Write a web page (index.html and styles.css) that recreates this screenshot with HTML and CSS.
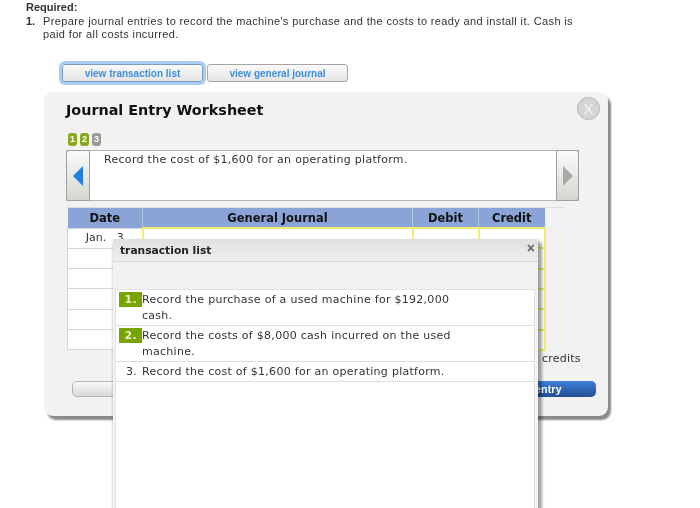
FILE: index.html
```html
<!DOCTYPE html>
<html lang="en">
<head>
<meta charset="utf-8">
<title>Journal Entry Worksheet</title>
<link rel="stylesheet" href="styles.css">
</head>
<body>
<div class="page">
  <section class="required">
    <div class="req-title">Required:</div>
    <div class="req-item"><b class="req-num">1.</b><span>Prepare journal entries to record the machine's purchase and the costs to ready and install it. Cash is paid for all costs incurred.</span></div>
  </section>
  <div class="tabs">
    <button class="tab tab-focus">view transaction list</button>
    <button class="tab">view general journal</button>
  </div>
  <section class="panel">
    <div class="close-round">X</div>
    <h1 class="panel-title">Journal Entry Worksheet</h1>
    <div class="steps"><span class="step done">1</span><span class="step done">2</span><span class="step todo">3</span></div>
    <div class="desc">
      <div class="nav-btn">
        <svg width="10" height="20" viewBox="0 0 10 20"><path d="M10 0V20L0 10Z" fill="#1f7fe0"/></svg>
      </div>
      <div class="desc-text">Record the cost of $1,600 for an operating platform.</div>
      <div class="nav-btn nav-next">
        <svg width="10" height="20" viewBox="0 0 10 20"><path d="M0 0V20L10 10Z" fill="#a9a9a9"/></svg>
      </div>
    </div>
    <div class="rule"></div>
    <table class="journal">
      <thead>
        <tr><th class="c-date">Date</th><th class="c-gj">General Journal</th><th class="c-num">Debit</th><th class="c-num">Credit</th></tr>
      </thead>
      <tbody>
        <tr><td class="date">Jan.&nbsp;&nbsp;&nbsp;3</td><td class="cell"></td><td class="cell"></td><td class="cell"></td></tr>
        <tr><td class="date"></td><td class="cell"></td><td class="cell"></td><td class="cell"></td></tr>
        <tr><td class="date"></td><td class="cell"></td><td class="cell"></td><td class="cell"></td></tr>
        <tr><td class="date"></td><td class="cell"></td><td class="cell"></td><td class="cell"></td></tr>
        <tr><td class="date"></td><td class="cell"></td><td class="cell"></td><td class="cell"></td></tr>
        <tr><td class="date"></td><td class="cell"></td><td class="cell"></td><td class="cell"></td></tr>
      </tbody>
    </table>
    <div class="credits">credits</div>
    <div class="actions">
      <div class="act act-grey"></div>
      <div class="act act-blue">entry</div>
    </div>
  </section>
  <section class="modal">
    <header class="modal-head"><span>transaction list</span><span class="modal-x">×</span></header>
    <div class="modal-body">
      <ol class="tx-list">
        <li class="tx"><span class="tx-num tx-done">1.</span><span class="tx-text">Record the purchase of a used machine for $192,000 cash.</span></li>
        <li class="tx"><span class="tx-num tx-done">2.</span><span class="tx-text">Record the costs of $8,000 cash incurred on the used machine.</span></li>
        <li class="tx"><span class="tx-num">3.</span><span class="tx-text">Record the cost of $1,600 for an operating platform.</span></li>
      </ol>
    </div>
  </section>
</div>
</body>
</html>
```
FILE: styles.css
```css
* { box-sizing: border-box; }
html, body { margin: 0; height: 508px; overflow: hidden; background: #fff; }
.page { position: relative; width: 700px; height: 508px; overflow: hidden; font-family: "DejaVu Sans", Verdana, sans-serif; color: #222; filter: blur(0.3px); }

.required { height: 42px; padding: 1px 0 0 26px; width: 580px; font: 11px/13.5px "Liberation Sans", Arial, sans-serif; color: #333; }
.req-title { font-weight: bold; }
.req-item { display: flex; letter-spacing: 0.37px; }
.req-num { width: 17px; flex: none; letter-spacing: 0; }

.tabs { display: flex; align-items: center; gap: 4px; margin: 22px 0 0 62px; height: 18px; }
.tab { height: 18px; width: 141px; padding: 0; border: 1px solid #a5a5a5; border-radius: 3px; background: linear-gradient(#fafafa, #e4e4e4); color: #3f8fdc; font: bold 10px "Liberation Sans", Arial, sans-serif; }
.tab-focus { border-color: #7d9cc2; box-shadow: 0 0 0 3px #a8ccf4; }

.panel { position: relative; margin: 10px 0 0 44px; width: 564px; height: 324px; padding: 8px 0 0 22px; background: #f2f2f2; border-radius: 9px; box-shadow: 3px 4px 2px #8a8a8a; }
.panel-title { margin: 0; font-size: 14.35px; line-height: 20px; font-weight: bold; color: #111; }
.close-round { position: absolute; right: 8px; top: 5px; width: 23px; height: 23px; border: 1px solid #b4b4b4; border-radius: 50%; background: #d5d5d5; color: #f4f4f4; font: 15px/21px "Liberation Sans", Arial, sans-serif; text-align: center; }
.steps { display: flex; gap: 3px; margin: 13px 0 0 2px; height: 14px; }
.step { width: 9px; height: 13px; border-radius: 3px; color: #fff; font: bold 9px/13px "Liberation Sans", Arial, sans-serif; text-align: center; }
.done { background: #86a91e; }
.todo { background: #9a9a9a; }

.desc { display: flex; width: 513px; height: 51px; margin-top: 3px; background: #fff; border: 1px solid #b5b5b5; }
.desc-text { flex: 1; padding: 2px 0 0 14px; font-size: 11px; line-height: 14px; letter-spacing: 0.3px; color: #333; }
.nav-btn { flex: none; display: flex; align-items: center; justify-content: center; width: 24px; margin: -1px 0 -1px -1px; padding-right: 1px; border: 1px solid #a0a0a0; border-radius: 3px 0 0 3px; background: linear-gradient(#fafafa, #d6d6d0); }
.nav-next { width: 23px; margin: -1px -1px -1px 0; padding: 0 0 0 1px; border-radius: 0 3px 3px 0; }

.rule { width: 498px; height: 1px; margin: 6px 0 0 1px; background: #dcdcdc; }
.journal { margin-left: 1px; width: 478px; border-collapse: collapse; table-layout: fixed; font-size: 11px; }
.journal th { height: 20px; padding: 0; background: #8aa4d8; border-left: 1px solid #b4c4e4; color: #111; font-size: 11.5px; font-weight: bold; }
.journal th:first-child { border-left: 0; }
.c-date { width: 75px; }
.c-gj { width: 270px; }
.c-num { width: 66px; }
.journal td { height: 20.33px; padding: 0; background: #fff; }
.date { border: 1px solid #d6d6d6; text-align: center; color: #333; vertical-align: top; line-height: 18px; font-size: 11px; }
.cell { border: 2px solid #f0ee70; }

.credits { position: absolute; z-index: 1; left: 498px; top: 260px; font-size: 11px; line-height: 14px; letter-spacing: 0.2px; color: #333; }
.actions { display: flex; justify-content: space-between; width: 524px; margin: 30px 0 0 6px; }
.act { height: 16px; width: 220px; border-radius: 5px; }
.act-grey { border: 1px solid #b5b5b5; background: linear-gradient(#fafafa, #d8d8d8); }
.act-blue { padding-left: 159px; background: linear-gradient(#3d7fdc, #234f92); color: #fff; font: bold 10.5px/16px "Liberation Sans", Arial, sans-serif; letter-spacing: 0.2px; }

.modal { position: absolute; left: 113px; top: 239px; width: 425px; height: 300px; background: #f2f2f2; border-radius: 5px 5px 0 0; box-shadow: -1px 1px 2px rgba(0,0,0,.14), 4px 2px 3px rgba(0,0,0,.36); }
.modal-head { display: flex; justify-content: space-between; height: 23px; padding: 1px 3px 0 7px; align-items: center; background: linear-gradient(#e0e0e0, #eeeeee); border-bottom: 1px solid #d8d8d8; font-size: 10.7px; font-weight: bold; color: #222; }
.modal-x { font: bold 14px/14px "Liberation Sans", Arial, sans-serif; color: #666; margin-top: -6px; }
.modal-body { padding: 27px 3px 0 2px; height: 277px; }
.tx-list { margin: 0; padding: 0; height: 100%; list-style: none; background: #fff; border: 1px solid #e2e2e2; border-width: 1px 1px 0; }
.tx { display: flex; padding: 2px 0 1px 3px; border-bottom: 1px solid #dcdcdc; font-size: 11px; line-height: 16px; letter-spacing: 0.28px; color: #333; }
.tx-num { flex: none; width: 23px; height: 15px; padding-right: 5px; text-align: right; font-weight: bold; line-height: 15px; }
.tx-done { background: #79a400; color: #e4efc6; }
.tx-num:not(.tx-done) { font-weight: normal; }
.tx-text { width: 320px; }
```
